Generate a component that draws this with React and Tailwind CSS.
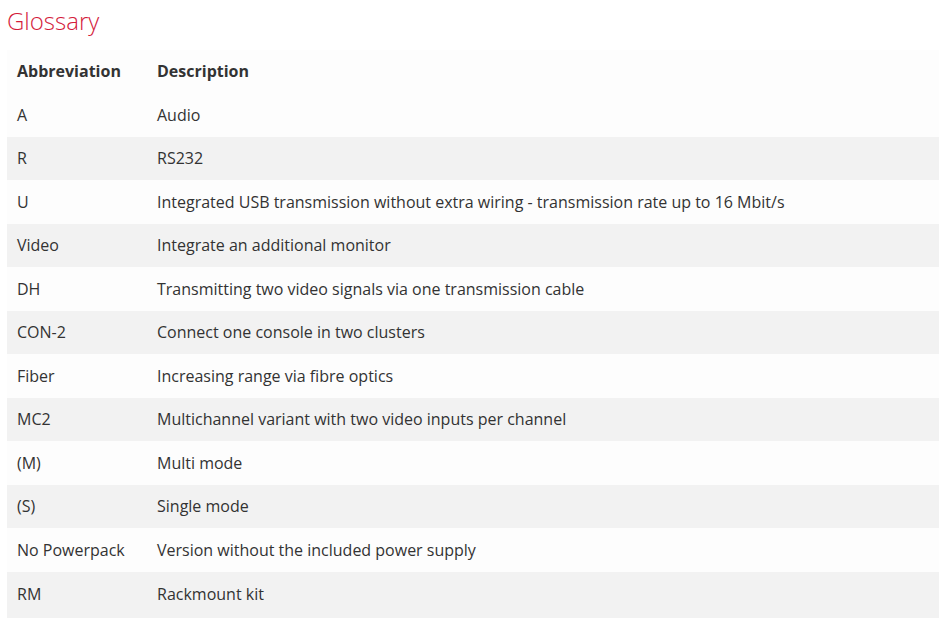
import React from "react";

const rows = [
  ["A", "Audio"],
  ["R", "RS232"],
  ["U", "Integrated USB transmission without extra wiring - transmission rate up to 16 Mbit/s"],
  ["Video", "Integrate an additional monitor"],
  ["DH", "Transmitting two video signals via one transmission cable"],
  ["CON-2", "Connect one console in two clusters"],
  ["Fiber", "Increasing range via fibre optics"],
  ["MC2", "Multichannel variant with two video inputs per channel"],
  ["(M)", "Multi mode"],
  ["(S)", "Single mode"],
  ["No Powerpack", "Version without the included power supply"],
  ["RM", "Rackmount kit"],
];

const App = () => {
  return (
    <div className="min-h-screen bg-white pl-[7px] pr-[1px] font-['Open_Sans',sans-serif] text-[#333]">
      <h2 className="pt-[3px] h-[49.5px] text-[24px] font-light leading-[35px] text-[#d41c3c]">Glossary</h2>
      <table className="w-full border-collapse text-[16px]">
        <thead>
          <tr className="h-[43.5px] bg-[#fdfdfd]">
            <th className="w-[140px] px-[10px] text-left font-bold">Abbreviation</th>
            <th className="px-[10px] text-left font-bold">Description</th>
          </tr>
        </thead>
        <tbody>
          {rows.map(([abbr, desc], i) => (
            <tr
              key={abbr}
              className={
                i % 2 === 0
                  ? "h-[43.5px] bg-[#fdfdfd]"
                  : i === rows.length - 1
                  ? "h-[47px] bg-[#f2f2f2] align-top"
                  : "h-[43.5px] bg-[#f2f2f2]"
              }
            >
              <td className={i === rows.length - 1 ? "px-[10px] pt-[10px]" : "px-[10px]"}>{abbr}</td>
              <td className={i === rows.length - 1 ? "px-[10px] pt-[10px]" : "px-[10px]"}>{desc}</td>
            </tr>
          ))}
        </tbody>
      </table>
    </div>
  );
};

export default App;
